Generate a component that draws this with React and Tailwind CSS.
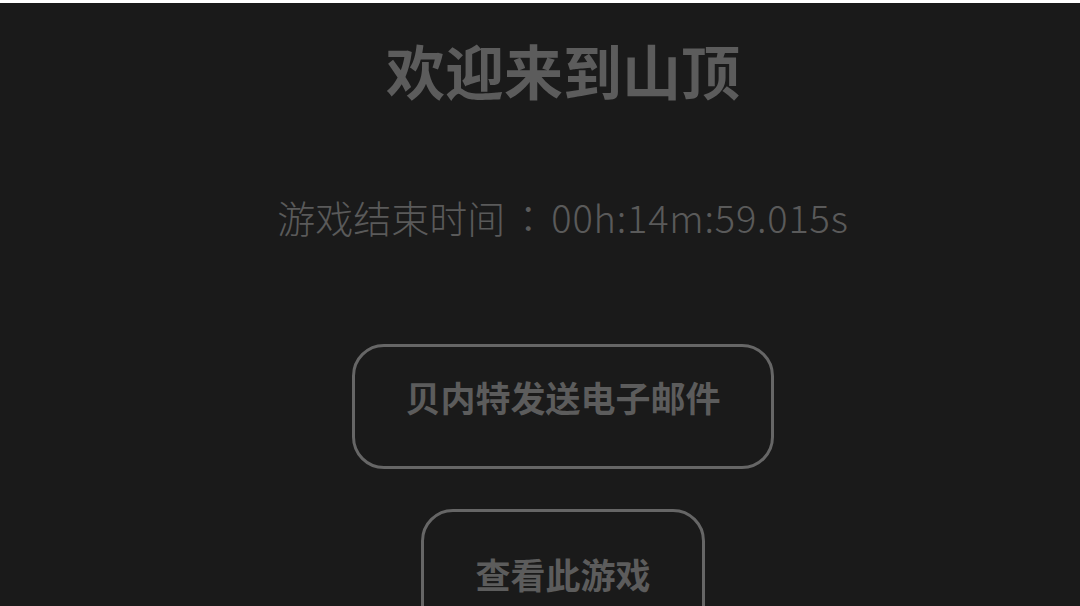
export default function App() {
  const font = { fontFamily: '"Noto Sans CJK SC", "Noto Sans", sans-serif' };
  return (
    <div className="w-[1080px] h-[606px] overflow-hidden bg-[#1a1a1a] flex flex-col" style={font}>
      <div className="h-[3px] bg-white shrink-0" />
      <div className="flex flex-col items-center pl-[46px]">
        <h1 className="mt-[37px] text-[59px] leading-none font-bold text-[#5c5c5c]">欢迎来到山顶</h1>
        <p className="mt-[99px] text-[38px] leading-none font-light text-[#5a5a5a]">
          游戏结束时间<span className="mx-[4px] font-['Noto_Sans_CJK_TC',sans-serif]">：</span><span className="tracking-[0.8px]">00h:14m:59.015s</span>
        </p>
        <button className="mt-[108px] border-[3px] border-[#666666] rounded-[32px] px-[50px] pt-[32px] pb-[52px] text-[35px] leading-none font-bold text-[#5c5c5c]">
          贝内特发送电子邮件
        </button>
        <button className="mt-[40px] border-[3px] border-[#666666] rounded-[32px] px-[51px] pt-[44px] pb-[48px] text-[35px] leading-none font-bold text-[#5c5c5c]">
          查看此游戏
        </button>
      </div>
    </div>
  );
}
